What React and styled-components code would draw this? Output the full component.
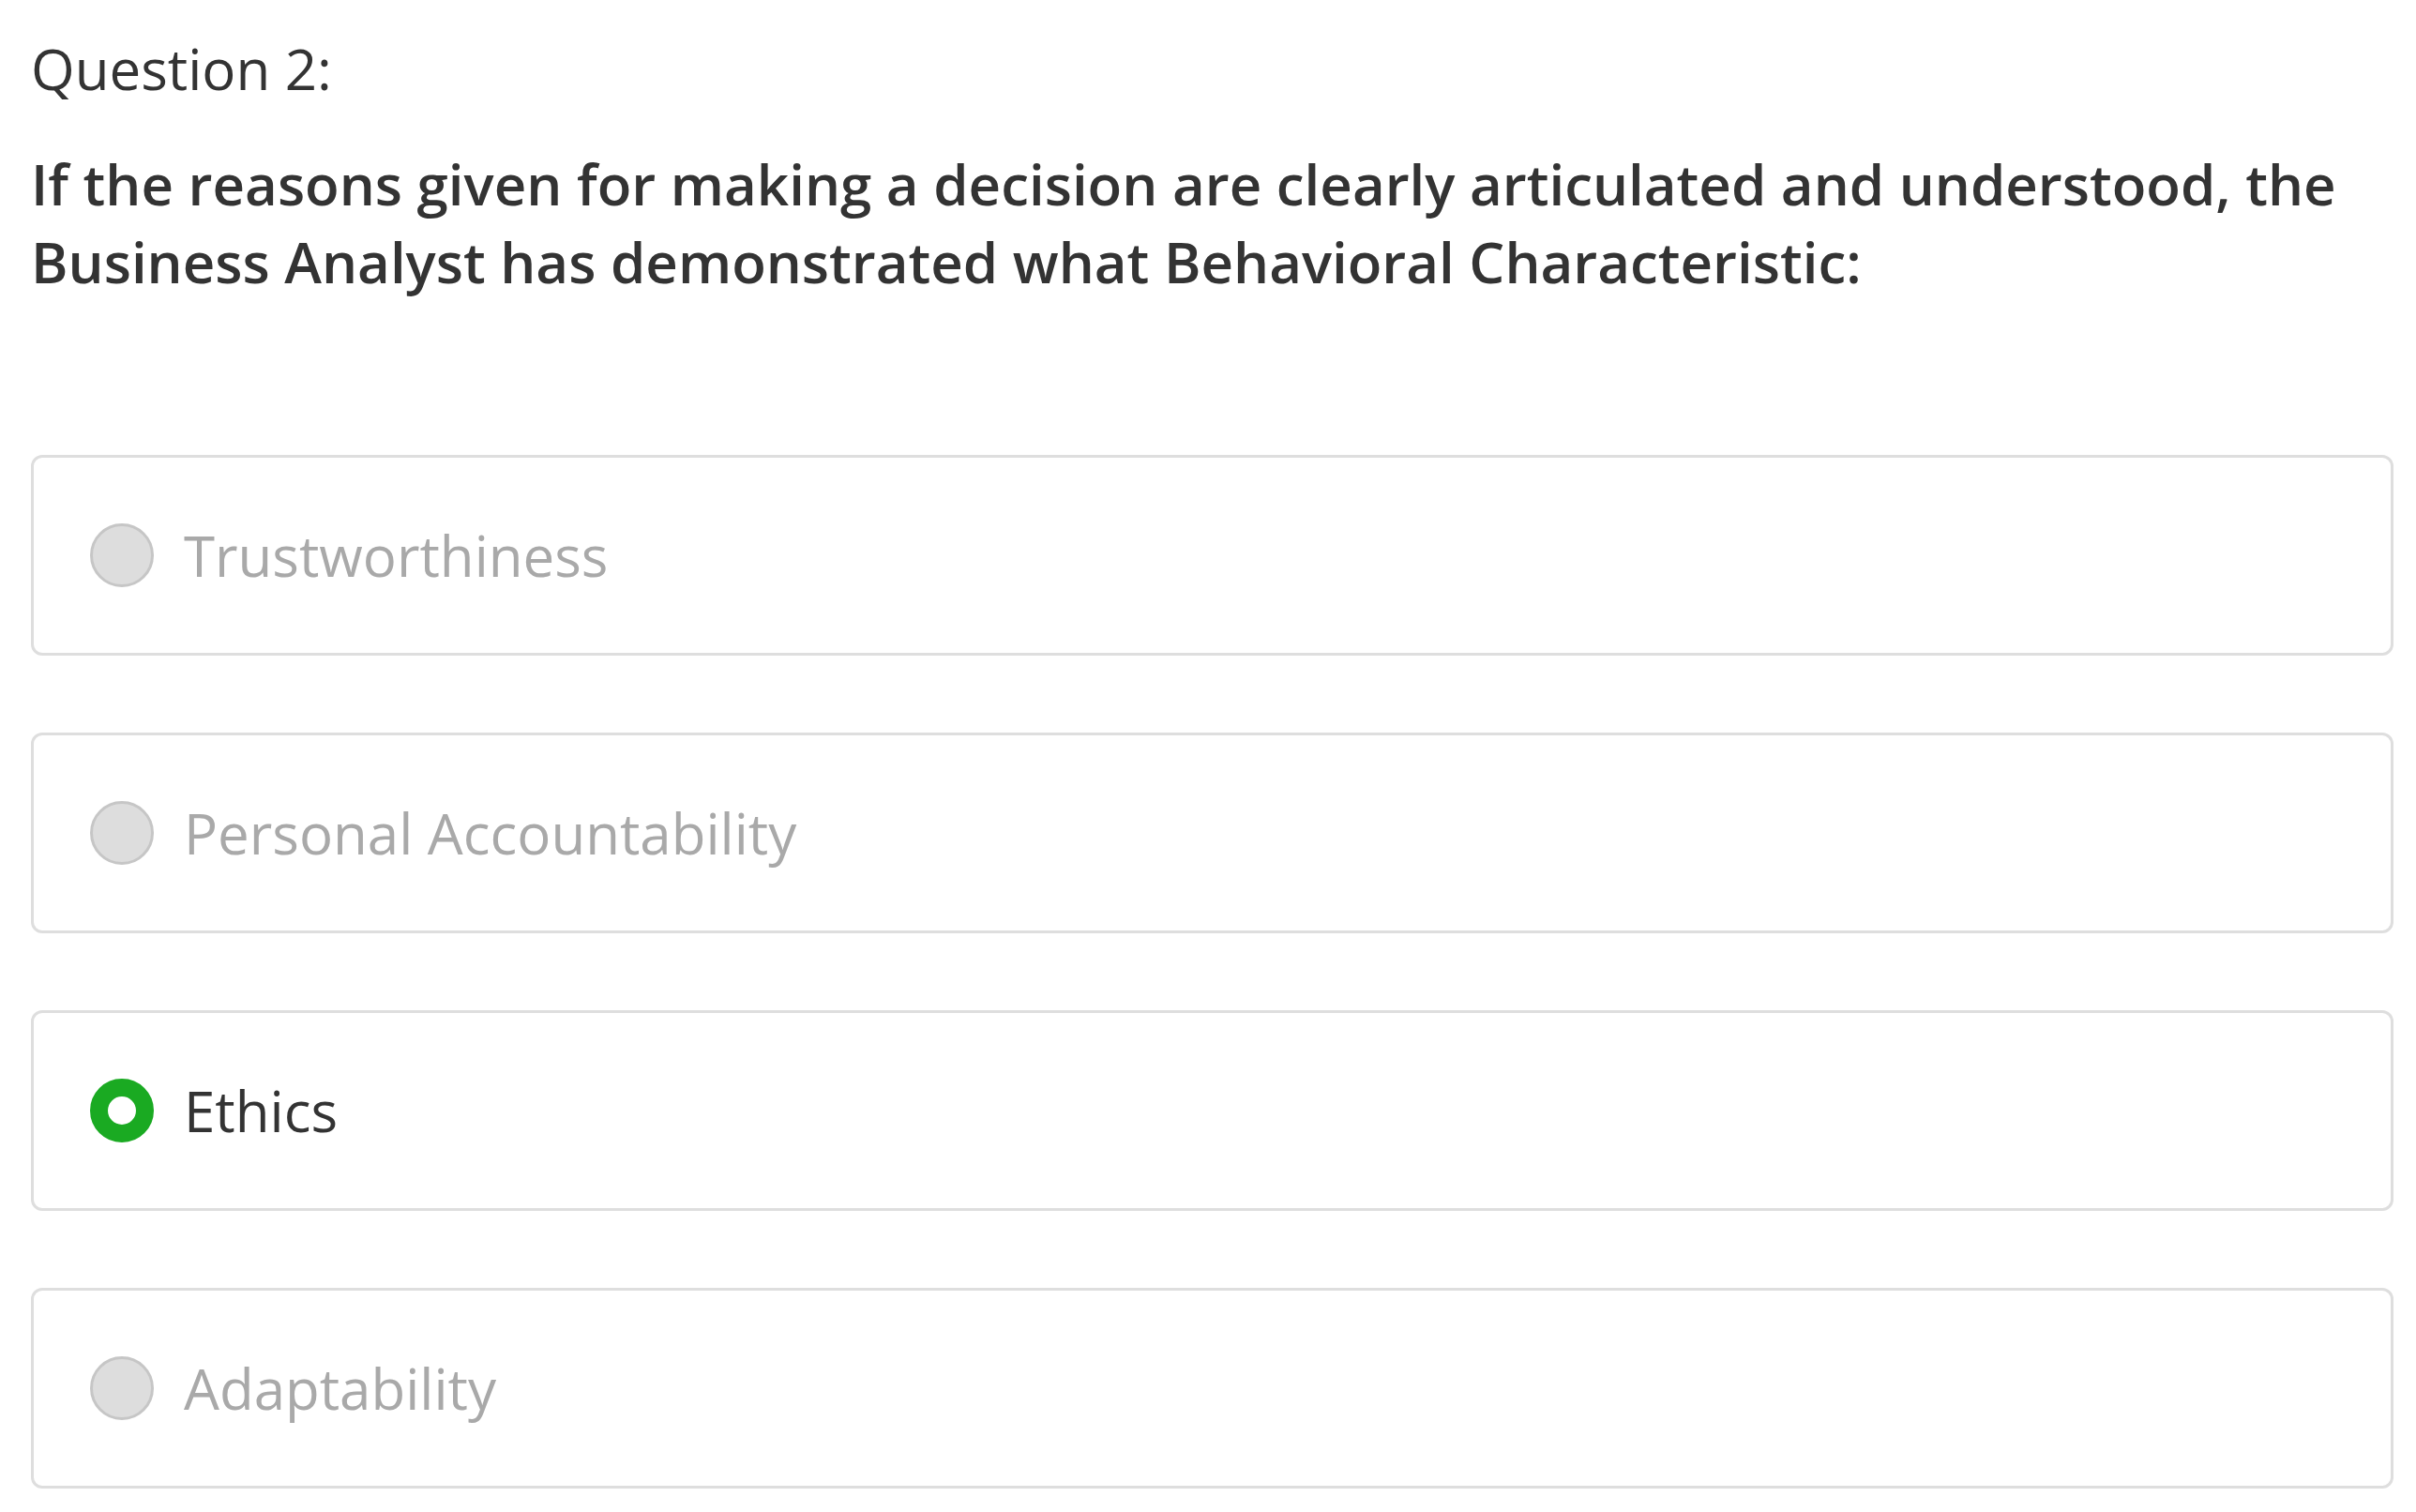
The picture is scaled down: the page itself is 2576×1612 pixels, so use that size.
import React, { useState } from 'react';
import styled, { createGlobalStyle } from 'styled-components';

const GlobalStyle = createGlobalStyle`
  body {
    margin: 0;
    background: #ffffff;
    font-family: 'Open Sans', 'Noto Sans', sans-serif;
  }
`;

const Page = styled.div`
  padding: 31px 24px 40px 33px;
`;

const Label = styled.div`
  font-size: 60px;
  line-height: 84px;
  color: #333333;
`;

const Prompt = styled.div`
  margin-top: 40px;
  font-size: 60px;
  line-height: 83px;
  font-weight: 600;
  color: #333333;
`;

const Options = styled.div`
  margin-top: 164px;
  display: flex;
  flex-direction: column;
  gap: 82px;
`;

const Option = styled.label`
  display: flex;
  align-items: center;
  gap: 32px;
  height: 214px;
  box-sizing: border-box;
  padding-left: 60px;
  border: 3px solid #dedede;
  border-radius: 12px;
  cursor: pointer;
`;

const Radio = styled.span`
  flex: none;
  box-sizing: border-box;
  width: 68px;
  height: 68px;
  border-radius: 50%;
  background: ${(p) => (p.checked ? '#ffffff' : '#dddddd')};
  border: ${(p) => (p.checked ? '19px solid #1aaa22' : '3px solid #c6c6c6')};
`;

const OptionText = styled.span`
  font-size: 60px;
  line-height: 84px;
  color: ${(p) => (p.checked ? '#333333' : '#a9a9a9')};
`;

const choices = [
  'Trustworthiness',
  'Personal Accountability',
  'Ethics',
  'Adaptability',
];

const App = () => {
  const [selected, setSelected] = useState('Ethics');

  return (
    <>
      <GlobalStyle />
      <Page>
        <Label>Question 2:</Label>
        <Prompt>
          If the reasons given for making a decision are clearly articulated and
          understood, the Business Analyst has demonstrated what Behavioral
          Characteristic:
        </Prompt>
        <Options>
          {choices.map((c) => (
            <Option key={c} onClick={() => setSelected(c)}>
              <Radio checked={selected === c} />
              <OptionText checked={selected === c}>{c}</OptionText>
            </Option>
          ))}
        </Options>
      </Page>
    </>
  );
};

export default App;
